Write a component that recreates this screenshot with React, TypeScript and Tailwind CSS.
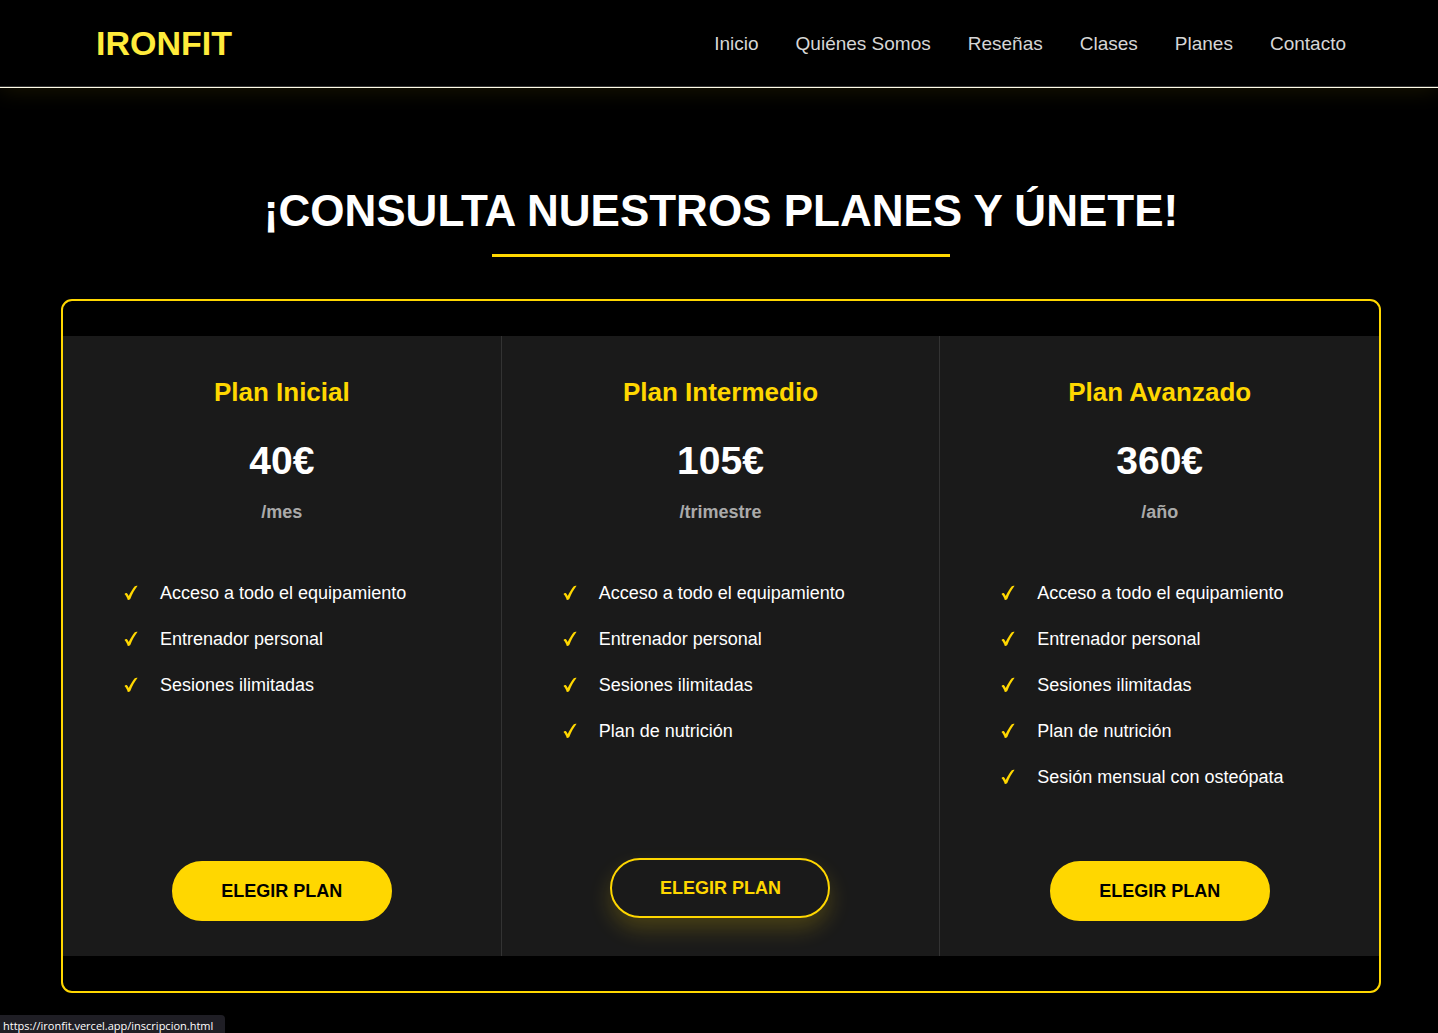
const links = ["Inicio", "Quiénes Somos", "Reseñas", "Clases", "Planes", "Contacto"];

const base = ["Acceso a todo el equipamiento", "Entrenador personal", "Sesiones ilimitadas"];

const plans = [
  { name: "Plan Inicial", price: "40€", period: "/mes", features: base, active: false },
  { name: "Plan Intermedio", price: "105€", period: "/trimestre", features: [...base, "Plan de nutrición"], active: true },
  {
    name: "Plan Avanzado",
    price: "360€",
    period: "/año",
    features: [...base, "Plan de nutrición", "Sesión mensual con osteópata"],
    active: false,
  },
];

function Check() {
  return (
    <svg viewBox="0 0 14 16" className="h-4 w-3.5 shrink-0" fill="#ffd700" aria-hidden="true">
      <path d="M.5 9C1.200 8.100 2.300 7.700 3 8.300c.7.700 1.200 1.700 1.700 2.800C6.500 7.300 8.700 3.700 10.800 1.300c.8-.6 1.800-.7 2.800-.5C10.800 4.400 8.300 9 6.300 13.900c-.6.800-1.600 1.200-2.500 1.100C3.100 12.800 2 10.500.5 9Z" />
    </svg>
  );
}

export default function App() {
  return (
    <div className="min-h-screen bg-black font-['Liberation_Sans',Arial,sans-serif] text-white">
      <header className="border-b border-[#fffbe6] shadow-[0_2px_22px_rgba(255,215,0,0.1)]">
        <div className="box-content flex h-[86px] items-center justify-between border-b border-[#333] pr-[92px] pl-24">
          <a href="#inicio" className="text-[34px] leading-10 font-bold text-[#ffeb3b]">
            IRONFIT
          </a>
          <nav className="flex gap-[37px] pt-0.5 text-[19px] leading-7 text-[#d6d6d6]">
            {links.map((l) => (
              <a key={l} href={"#" + l.toLowerCase().replace(" ", "-")}>
                {l}
              </a>
            ))}
          </nav>
        </div>
      </header>

      <main className="pt-[88px] pr-[57px] pb-10 pl-[61px]">
        <h1 className="text-center text-[44px] leading-[70px] font-bold">¡CONSULTA NUESTROS PLANES Y ÚNETE!</h1>
        <div className="mx-auto mt-2 h-[3px] w-[458px] bg-[#ffd700]" />

        <div className="mx-auto mt-[42px] max-w-[1320px] rounded-[11px] border-2 border-[#ffd700] py-[35px]">
          <div className="grid grid-cols-3 bg-[#1a1a1a]">
            {plans.map((p) => (
              <section
                key={p.name}
                className="flex min-h-[620px] flex-col items-center border-r border-[#333] px-[35px] py-[35px] last:border-r-0"
              >
                <h2 className="text-[26px] leading-[42px] font-bold text-[#ffd700]">{p.name}</h2>
                <p className="mt-[18px] text-[39px] leading-[60px] font-bold">{p.price}</p>
                <p className="mt-[7px] text-lg leading-7 font-bold text-[#aaa]">{p.period}</p>
                <ul className="mt-11 mb-auto w-full pl-[26px] text-lg leading-[46px]">
                  {p.features.map((f) => (
                    <li key={f} className="flex items-center gap-[22px]">
                      <Check />
                      {f}
                    </li>
                  ))}
                </ul>
                <button
                  type="button"
                  className={
                    p.active
                      ? "h-[60px] w-[220px] -translate-y-[3px] rounded-full border-2 border-[#ffd700] text-lg font-bold text-[#ffd700] shadow-[0_11px_22px_rgba(255,215,0,0.2)]"
                      : "h-[60px] w-[220px] rounded-full border-2 border-[#ffd700] bg-[#ffd700] text-lg font-bold text-black"
                  }
                >
                  ELEGIR PLAN
                </button>
              </section>
            ))}
          </div>
        </div>
      </main>

      <div className="fixed bottom-0 left-0 h-[18px] rounded-tr bg-[#1f1e25] pr-3 pl-[3px] font-['Open_Sans','Noto_Sans',sans-serif] text-[11px] leading-[21px] text-white">
        https://ironfit.vercel.app/inscripcion.html
      </div>
    </div>
  );
}
